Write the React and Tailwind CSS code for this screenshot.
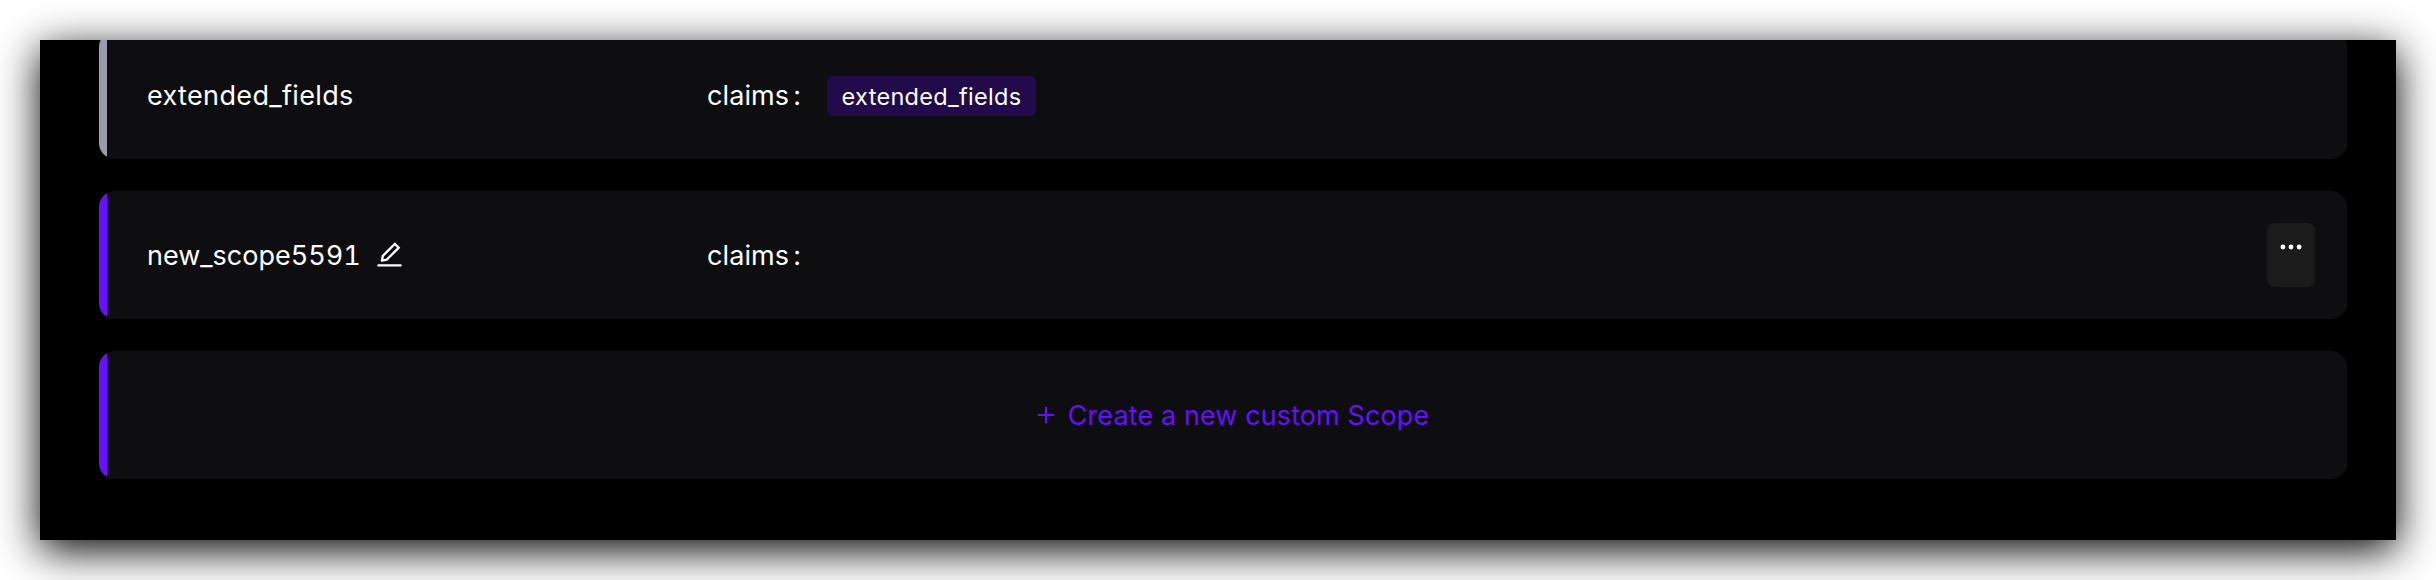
import { AiOutlineEdit } from "react-icons/ai";

function ScopeCard({ accent, children }) {
  return (
    <section className="flex h-32 shrink-0 overflow-hidden rounded-2xl bg-[#0e0e10]">
      <div className={`w-2 shrink-0 ${accent}`} />
      {children}
    </section>
  );
}

function Claims({ children }) {
  return (
    <div className="flex flex-1 items-center pt-[2px]">
      <span className="w-[94px] shrink-0 tracking-[0.1px]">
        claims<span className="ml-1">:</span>
      </span>
      {children}
    </div>
  );
}

export default function App() {
  return (
    <div className="h-[580px] w-[2436px] overflow-hidden bg-white p-10 font-['Inter',sans-serif] text-[27px] leading-10 font-normal text-white">
      <div className="h-[500px] bg-black shadow-[0_10px_40px_#000]">
        <main className="flex h-full flex-col justify-end gap-8 overflow-hidden pr-[49px] pb-[61px] pl-[59px]">
          <ScopeCard accent="bg-[#9a9caa]">
            <div className="flex w-[600px] items-center pt-[2px] pl-10">
              <span className="tracking-[0.35px]">extended_fields</span>
            </div>
            <Claims>
              <span className="ml-[26px] flex h-10 w-[209px] items-center justify-center rounded-md bg-[#210b4b] pt-[2px] text-[23.5px] tracking-[0.3px]">
                extended_fields
              </span>
            </Claims>
          </ScopeCard>
          <ScopeCard accent="bg-[#6610ff]">
            <div className="flex w-[600px] items-center pt-[2px] pl-10">
              <span className="w-[214px] tabular-nums">new_scope5591</span>
              <AiOutlineEdit className="mb-1 ml-[13px] size-[31px]" />
            </div>
            <Claims />
            <button className="mt-8 mr-8 flex h-16 w-12 justify-center rounded-lg bg-[#1b1b1b] pt-[21px]">
              <svg width="24" height="6" viewBox="0 0 24 6" fill="currentColor">
                <circle cx="3.9" cy="3" r="2.4" />
                <circle cx="12" cy="3" r="2.4" />
                <circle cx="20.1" cy="3" r="2.4" />
              </svg>
            </button>
          </ScopeCard>
          <ScopeCard accent="bg-[#6610ff]">
            <button className="flex flex-1 items-center justify-center pt-[2px] pl-[11px] text-[#6610ff]">
              <svg className="mr-3 mb-[2px]" width="20" height="20" viewBox="0 0 20 20" stroke="currentColor" strokeWidth="2.2">
                <path d="M1.8 10h16.4M10 1.8v16.4" />
              </svg>
              <span className="tracking-[0.1px]">Create a new custom Scope</span>
            </button>
          </ScopeCard>
        </main>
      </div>
    </div>
  );
}
